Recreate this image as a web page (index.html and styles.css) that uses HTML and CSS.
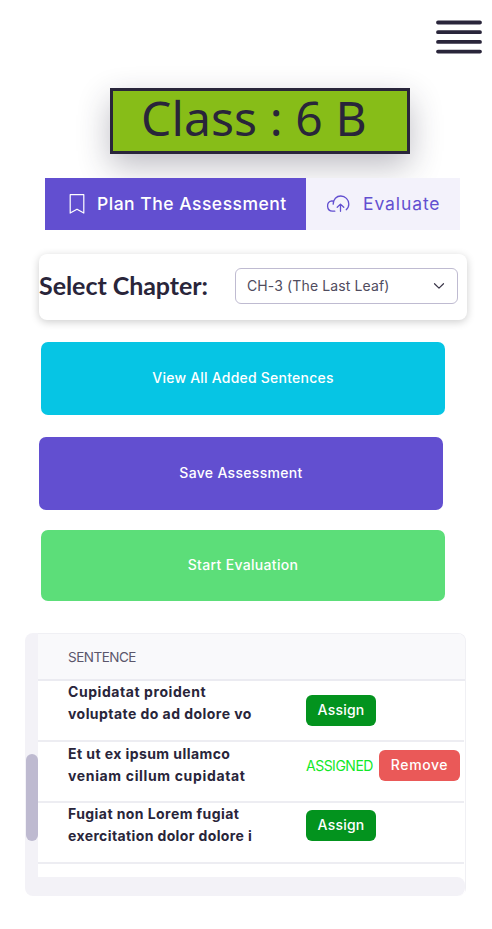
FILE: index.html
```
<!DOCTYPE html>
<html lang="en">
<head>
<meta charset="utf-8">
<meta name="viewport" content="width=device-width">
<title>Class assessment</title>
<link rel="stylesheet" href="styles.css">
</head>
<body>
<header class="topbar">
  <svg class="menu" width="48" height="36" viewBox="0 0 48 36" fill="none" stroke="#29253a" stroke-width="3.8" stroke-linecap="round"><path d="M3 3.500h42M3 13.200h42M3 22.900h42M3 32.600h42"/></svg>
</header>
<h1 class="title"><span>Class : 6 B</span></h1>
<nav class="tabs">
  <a class="tab active"><svg width="18" height="22" viewBox="0 0 18 22" fill="none" stroke="currentColor" stroke-width="1.200" stroke-linejoin="round"><path d="M2.200 1.700h13.600v18.400L9 16.200l-6.800 3.900z"/></svg><span class="plan">Plan The Assessment</span></a>
  <a class="tab"><svg width="24" height="20" viewBox="0 0 24 20" fill="none" stroke="currentColor" stroke-width="1.300" stroke-linecap="round" stroke-linejoin="round"><path d="M8.800 17.200H6.500A5.200 5.200 0 0 1 5.800 6.900l2 .2M7.200 10.200C7.200 5.300 10.500 2 14.800 2a8 8 0 0 1 8 8c0 2.400-1 4.500-2.600 5.700M14.500 17.300V10.200M11.200 13.300l3.300-3.200 3.300 3.200"/></svg><span class="evaluate">Evaluate</span></a>
</nav>
<section class="chapter">
  <h2><span>Select Chapter:</span></h2>
  <div class="select"><span class="value">CH-3 (The Last Leaf)</span><svg width="12" height="8" viewBox="0 0 12 8" fill="none" stroke="#393548" stroke-width="1.200" stroke-linecap="round" stroke-linejoin="round"><path d="M1.500 1.700L6 6.100l4.500-4.400"/></svg></div>
</section>
<main class="actions">
  <button class="action view"><span>View All Added Sentences</span></button>
  <button class="action save"><span>Save Assessment</span></button>
  <button class="action start"><span>Start Evaluation</span></button>
</main>
<section class="panel">
  <div class="track"><div class="thumb"></div></div>
  <div class="table">
    <div class="head"><span>SENTENCE</span></div>
    <div class="row r1"><p><span class="s1">Cupidatat proident</span><br><span class="s2">voluptate do ad dolore vo</span></p><div class="ops"><button class="assign">Assign</button></div></div>
    <div class="row r2"><p><span class="s3">Et ut ex ipsum ullamco</span><br><span class="s4">veniam cillum cupidatat</span></p><div class="ops"><span class="assigned">ASSIGNED</span><button class="remove">Remove</button></div></div>
    <div class="row r3"><p><span class="s5">Fugiat non Lorem fugiat</span><br><span class="s6">exercitation dolor dolore i</span></p><div class="ops"><button class="assign">Assign</button></div></div>
  </div>
  <div class="bottom"><div class="bar"></div></div>
</section>
</body>
</html>
```
FILE: styles.css
```
* { box-sizing: border-box; }
body { margin: 0; width: 492px; height: 929px; overflow: hidden; background: #fff; color: #29253a; font-family: Inter, sans-serif; }
h1, h2, p { margin: 0; }
button { border: 0; padding: 0; font: inherit; color: #fff; }
span { white-space: nowrap; }
.topbar { display: flex; justify-content: flex-end; height: 88px; padding: 19px 9px 0 0; }
.title { width: 300px; height: 66px; margin-left: 110px; padding-left: 28px; border: 3px solid #29253a; background: #87bd18; font: 400 48px/53px "Noto Sans", sans-serif; letter-spacing: .1px; box-shadow: 0 12px 32px rgba(41, 37, 58, .3); }
.tabs { display: flex; position: relative; width: 415px; height: 52px; margin: 24px 0 0 45px; background: #f3f2fb; color: #624fd0; font-size: 17.5px; }
.tabs span { padding-bottom: 2px; }
.tab { display: flex; align-items: center; gap: 13px; width: 154px; padding-left: 20px; }
.active { width: 261px; gap: 11px; padding-left: 23px; background: #624fd0; color: #fff; }
.plan { font-weight: 500; letter-spacing: .5px; }
.evaluate { letter-spacing: .9px; }
.chapter { display: flex; width: 428px; height: 66px; margin: 24px 0 0 39px; border-radius: 8px; background: #fff; box-shadow: 0 2px 8px rgba(0, 0, 0, .2); }
.chapter h2 { width: 196px; font: 700 25px/63px Lato, sans-serif; letter-spacing: -.05px; }
.select { display: flex; align-items: center; justify-content: space-between; width: 223px; height: 36px; margin-top: 14px; padding: 0 12px 0 11px; border: 1px solid #bfbbd1; border-radius: 6px; color: #504c5e; font-size: 14px; letter-spacing: .12px; }
.value { padding-bottom: 2px; }
.actions { margin: 22px 0 0 39px; }
.action { display: block; width: 404px; height: 73px; padding-bottom: 2px; border-radius: 7px; font-size: 14px; font-weight: 500; letter-spacing: .32px; }
.view { margin-left: 2px; background: #06c5e4; letter-spacing: .22px; }
.save { margin-top: 22px; background: #624fd0; }
.start { height: 71px; margin: 20px 0 0 2px; background: #5cde79; }
.panel { display: grid; grid-template: 244px 19px / 13px 428px; width: 441px; height: 263px; margin: 32px 0 0 25px; border-radius: 8px; overflow: hidden; background: #f3f2f7; }
.track { padding: 121px 0 0 1px; }
.thumb { width: 12px; height: 87px; border-radius: 6px; background: #bebad0; }
.table { border: solid #f0f0f4; border-width: 1px 1px 0 0; border-radius: 0 8px 0 0; background: #fff; }
.head { height: 47px; padding-left: 30px; border-bottom: 2px solid #ebebf1; border-radius: 0 7px 0 0; background: #f9f9fb; color: #5b566b; font-size: 13.5px; line-height: 46px; letter-spacing: -.5px; }
.row { display: flex; width: 426px; height: 61px; padding-left: 30px; border-bottom: 2px solid #ededf2; font-size: 14px; font-weight: 700; line-height: 22px; }
.row p { width: 238px; }
.r2 p { padding-top: 1px; }
.s1 { letter-spacing: .57px; }
.s2 { letter-spacing: .45px; }
.s3 { letter-spacing: .43px; }
.s4 { letter-spacing: .65px; }
.s5 { letter-spacing: .43px; }
.s6 { letter-spacing: .38px; }
.ops { display: flex; height: 31px; margin-top: 14px; font-weight: 500; line-height: 31px; }
.r2 .ops { margin-top: 8px; }
.r3 .ops { margin-top: 7px; }
.ops button { padding-bottom: 1px; line-height: 30px; }
.assign { width: 70px; border-radius: 6px; background: #03931e; letter-spacing: .2px; }
.remove { width: 81px; border-radius: 6px; background: #ea5958; letter-spacing: .6px; }
.assigned { width: 73px; color: #12e829; font-weight: 400; letter-spacing: -.5px; }
.bottom { grid-column: 2; border-right: 1px solid #f0f0f4; background: #fff; }
.bar { height: 19px; border-radius: 0 8px 8px 0; background: #f3f2f7; }
```
